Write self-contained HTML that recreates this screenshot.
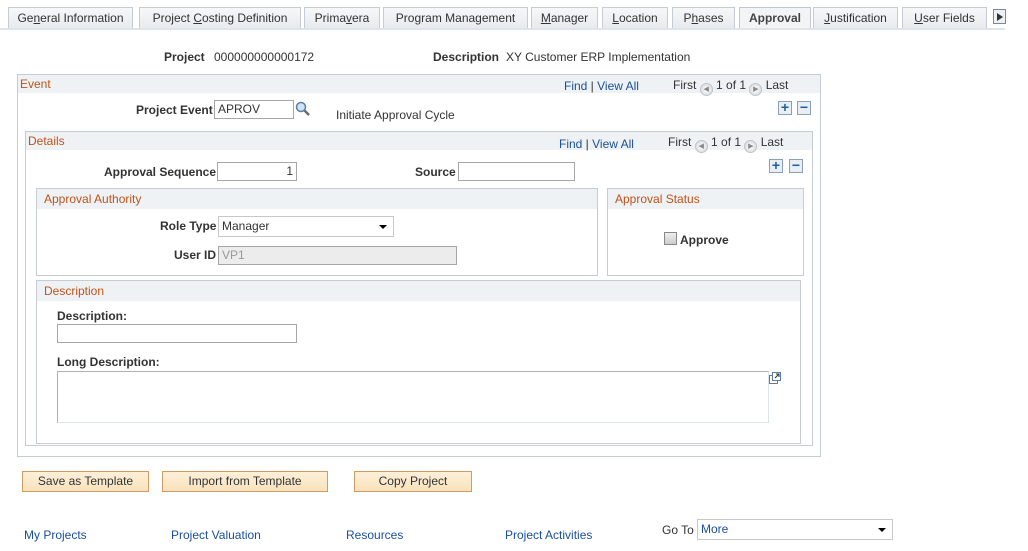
<!DOCTYPE html>
<html><head><meta charset="utf-8"><style>
*{box-sizing:border-box;margin:0;padding:0}
body{width:1028px;height:551px;background:#fff;font-family:"Liberation Sans",Arial,sans-serif;font-size:12px;color:#333;position:relative;overflow:hidden}
.a{position:absolute;white-space:nowrap}
.tab{position:absolute;top:7px;height:21px;border:1px solid #c6ccd4;border-bottom:none;background:linear-gradient(#f6f7f8,#e8ebee);color:#333;font-size:12px;text-align:center;line-height:20px}
.tab.on{background:#f2f4f6;font-weight:bold;color:#444;border-color:#bcc8d6}
.box{position:absolute;border:1px solid #c6ccd4}
.hd{position:absolute;left:0;right:0;top:0;height:18px;background:#eff2f4;color:#c0521a;padding-left:2px;line-height:18px;font-size:12px}
.b{font-weight:bold}
.inp{position:absolute;border:1px solid #a6a6a6;background:#fff;height:19px;font-size:12px;line-height:17px;padding:0 3px}
.lnk{color:#1a4f9c}
.btn{position:absolute;top:471px;height:21px;border:1px solid #d49a62;background:linear-gradient(#fdf0d8,#f8e2bd);text-align:center;line-height:19px;color:#333}
.pm{position:absolute;width:14px;height:14px;border:1px solid #8aa0b8;background:#e9eef3;color:#1f5ea0;font-weight:bold;font-size:14px;line-height:11px;text-align:center}
.circ{display:inline-block;width:13px;height:13px;border-radius:50%;background:radial-gradient(#fff,#cfd4d9);border:1px solid #c0c4c8;vertical-align:-2px;font-size:7px;line-height:11px;text-align:center;color:#888}
</style></head><body>
<div class="a" style="left:0;top:28px;width:1005px;height:2px;background:#dde4ec"></div>
<div class="tab" style="left:8px;width:125px">Ge<u>n</u>eral Information</div>
<div class="tab" style="left:139px;width:162px">Project <u>C</u>osting Definition</div>
<div class="tab" style="left:304px;width:76px">Prima<u>v</u>era</div>
<div class="tab" style="left:383px;width:145px">Pro<u>g</u>ram Management</div>
<div class="tab" style="left:531px;width:67px"><u>M</u>anager</div>
<div class="tab" style="left:602px;width:66px"><u>L</u>ocation</div>
<div class="tab" style="left:672px;width:63px">P<u>h</u>ases</div>
<div class="tab on" style="left:739px;width:72px">Approval</div>
<div class="tab" style="left:813px;width:85px"><u>J</u>ustification</div>
<div class="tab" style="left:902px;width:85px"><u>U</u>ser Fields</div>
<div class="a" style="left:993px;top:9px;width:13px;height:15px;border:1px solid #7a8a9a;background:#eef1f4"><div style="position:absolute;left:3px;top:3px;border-left:6px solid #333;border-top:4px solid transparent;border-bottom:4px solid transparent"></div></div>

<div class="a b" style="left:164px;top:50px">Project</div>
<div class="a" style="left:214px;top:50px">000000000000172</div>
<div class="a b" style="left:433px;top:50px">Description</div>
<div class="a" style="left:506px;top:50px">XY Customer ERP Implementation</div>

<div class="box" style="left:17px;top:74px;width:804px;height:383px">
 <div class="hd">Event</div>
 <div class="a" style="left:546px;top:4px"><span class="lnk">Find</span> | <span class="lnk">View All</span></div>
 <div class="a" style="left:655px;top:3px">First <span class="circ">◀</span> 1 of 1 <span class="circ">▶</span> Last</div>
</div>
<div class="a b" style="left:136px;top:103px">Project Event</div>
<div class="inp" style="left:214px;top:100px;width:80px">APROV</div>
<svg class="a" style="left:295px;top:101px" width="16" height="16"><circle cx="6" cy="6" r="4.5" fill="#cfe3f5" stroke="#5a7fa8" stroke-width="1.5"/><line x1="9.5" y1="9.5" x2="14" y2="14" stroke="#6b6b6b" stroke-width="2.5"/></svg>
<div class="a" style="left:336px;top:108px">Initiate Approval Cycle</div>
<div class="pm" style="left:778px;top:101px">+</div><div class="pm" style="left:797px;top:101px">−</div>

<div class="box" style="left:25px;top:131px;width:788px;height:315px">
 <div class="hd">Details</div>
 <div class="a" style="left:533px;top:5px"><span class="lnk">Find</span> | <span class="lnk">View All</span></div>
 <div class="a" style="left:642px;top:3px">First <span class="circ">◀</span> 1 of 1 <span class="circ">▶</span> Last</div>
</div>
<div class="a b" style="left:104px;top:165px">Approval Sequence</div>
<div class="inp" style="left:217px;top:162px;width:80px;text-align:right">1</div>
<div class="a b" style="left:415px;top:165px">Source</div>
<div class="inp" style="left:458px;top:162px;width:117px"></div>
<div class="pm" style="left:769px;top:159px">+</div><div class="pm" style="left:789px;top:159px">−</div>

<div class="box" style="left:36px;top:188px;width:562px;height:88px"><div class="hd" style="padding-left:7px;height:20px;line-height:20px">Approval Authority</div></div>
<div class="a b" style="left:160px;top:219px">Role Type</div>
<div class="inp" style="left:218px;top:216px;width:176px;height:21px;border-color:#c8c8c8;line-height:19px">Manager<div style="position:absolute;right:6px;top:8px;border-top:4px solid #000;border-left:4px solid transparent;border-right:4px solid transparent"></div></div>
<div class="a b" style="left:174px;top:248px">User ID</div>
<div class="inp" style="left:218px;top:246px;width:239px;background:#ececec;color:#999">VP1</div>

<div class="box" style="left:607px;top:188px;width:197px;height:88px"><div class="hd" style="padding-left:7px;height:20px;line-height:20px">Approval Status</div></div>
<div class="a" style="left:664px;top:232px;width:13px;height:13px;border:1px solid #888;background:linear-gradient(#eee,#ccc)"></div>
<div class="a b" style="left:680px;top:233px">Approve</div>

<div class="box" style="left:36px;top:280px;width:765px;height:164px"><div class="hd" style="padding-left:7px;height:20px;line-height:20px">Description</div></div>
<div class="a b" style="left:57px;top:309px">Description:</div>
<div class="inp" style="left:57px;top:324px;width:240px"></div>
<div class="a b" style="left:57px;top:355px">Long Description:</div>
<div class="inp" style="left:57px;top:371px;width:712px;height:52px;border-color:#b0b0b0 #dde3ea #dde3ea #b0b0b0"></div>
<svg class="a" style="left:769px;top:372px" width="13" height="13"><rect x="0.5" y="3.5" width="8" height="8" fill="#fff" stroke="#777"/><rect x="3.5" y="0.5" width="8" height="8" fill="#fff" stroke="#5a7fa8"/><path d="M6 6L10 2M7 2h3v3" stroke="#333" fill="none"/></svg>

<div class="btn" style="left:22px;width:127px">Save as Template</div>
<div class="btn" style="left:162px;width:166px">Import from Template</div>
<div class="btn" style="left:354px;width:118px">Copy Project</div>

<div class="a lnk" style="left:24px;top:528px">My Projects</div>
<div class="a lnk" style="left:171px;top:528px">Project Valuation</div>
<div class="a lnk" style="left:346px;top:528px">Resources</div>
<div class="a lnk" style="left:505px;top:528px">Project Activities</div>
<div class="a" style="left:662px;top:523px;color:#333">Go To</div>
<div class="inp lnk" style="left:697px;top:519px;width:196px;height:21px;border-color:#c8c8c8;line-height:19px">More<div style="position:absolute;right:6px;top:8px;border-top:4px solid #000;border-left:4px solid transparent;border-right:4px solid transparent"></div></div>
</body></html>
